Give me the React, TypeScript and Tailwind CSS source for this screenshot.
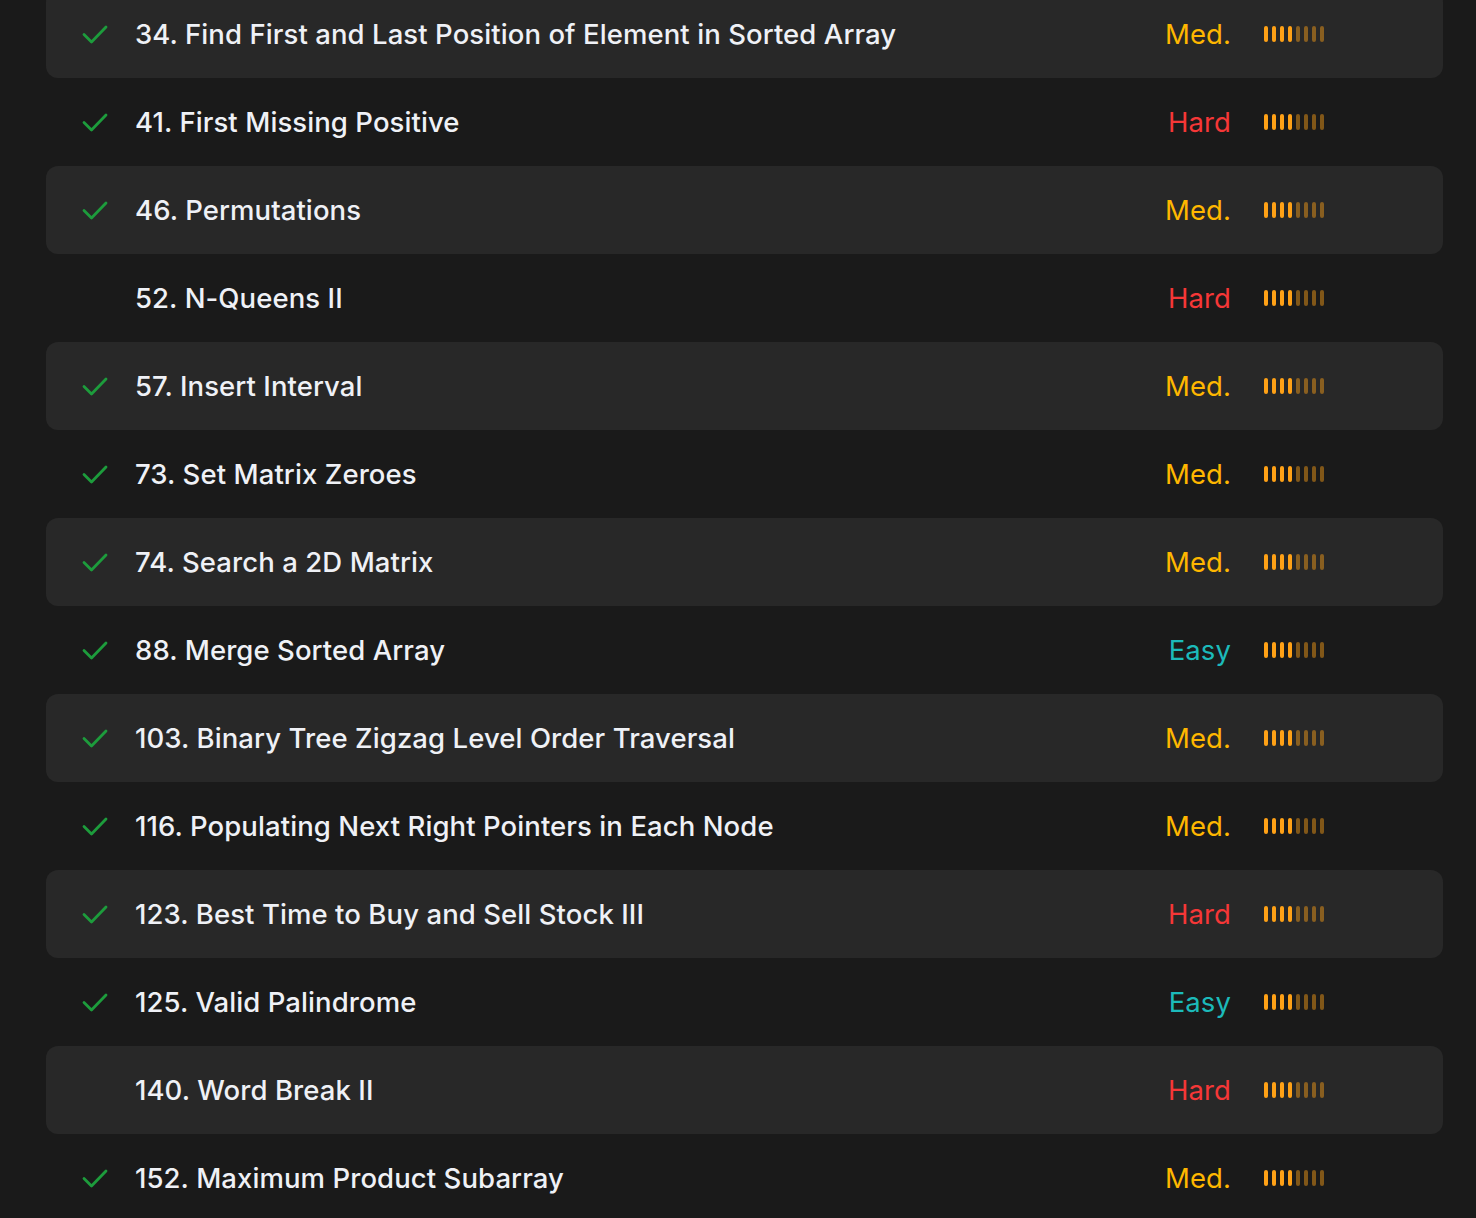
import React from 'react';

type Difficulty = 'Easy' | 'Med.' | 'Hard';

interface Problem {
  title: string;
  difficulty: Difficulty;
  solved: boolean;
}

const problems: Problem[] = [
  { title: '34. Find First and Last Position of Element in Sorted Array', difficulty: 'Med.', solved: true },
  { title: '41. First Missing Positive', difficulty: 'Hard', solved: true },
  { title: '46. Permutations', difficulty: 'Med.', solved: true },
  { title: '52. N-Queens II', difficulty: 'Hard', solved: false },
  { title: '57. Insert Interval', difficulty: 'Med.', solved: true },
  { title: '73. Set Matrix Zeroes', difficulty: 'Med.', solved: true },
  { title: '74. Search a 2D Matrix', difficulty: 'Med.', solved: true },
  { title: '88. Merge Sorted Array', difficulty: 'Easy', solved: true },
  { title: '103. Binary Tree Zigzag Level Order Traversal', difficulty: 'Med.', solved: true },
  { title: '116. Populating Next Right Pointers in Each Node', difficulty: 'Med.', solved: true },
  { title: '123. Best Time to Buy and Sell Stock III', difficulty: 'Hard', solved: true },
  { title: '125. Valid Palindrome', difficulty: 'Easy', solved: true },
  { title: '140. Word Break II', difficulty: 'Hard', solved: false },
  { title: '152. Maximum Product Subarray', difficulty: 'Med.', solved: true },
];

const difficultyColor: Record<Difficulty, string> = {
  Easy: 'text-[#1cbaba]',
  'Med.': 'text-[#ffb700]',
  Hard: 'text-[#f63737]',
};

const CheckIcon = () => (
  <svg width="26" height="20" viewBox="0 0 26 20" fill="none">
    <path
      d="M2 10.5l7.5 7.5L24 3"
      stroke="#1d9c3c"
      strokeWidth={2.8}
      strokeLinecap="round"
      strokeLinejoin="round"
    />
  </svg>
);

/** Frequency meter: 8 small pills, first 4 lit */
const FrequencyBars = ({ level = 4 }: { level?: number }) => (
  <div className="flex items-center gap-[4px]">
    {Array.from({ length: 8 }).map((_, i) => (
      <span
        key={i}
        className={`block h-[16px] w-[4px] rounded-full ${i < level ? 'bg-[#ffa116]' : 'bg-[#ffa116]/45'}`}
      />
    ))}
  </div>
);

export default function App() {
  return (
    <div
      className="min-h-[1218px] w-full overflow-hidden bg-[#1a1a1a] pl-[46px] pr-[33px]"
      style={{ fontFamily: 'Inter, "Noto Sans", sans-serif' }}
    >
      <div className="-mt-[10px] flex flex-col">
        {problems.map((p, i) => (
          <div
            key={p.title}
            className={`flex h-[88px] items-center rounded-[12px] pl-[36px] pr-[119px] ${i % 2 === 0 ? 'bg-[#282828]' : ''}`}
          >
            <div className="flex w-[53px] items-center">{p.solved && <CheckIcon />}</div>
            <div className="flex-1 truncate pt-[2px] text-[27.5px] font-medium tracking-[0.08px] text-[#eff1f6]">
              {p.title}
            </div>
            <div className={`pt-[2px] text-right text-[27.5px] tracking-[0.1px] ${difficultyColor[p.difficulty]}`}>
              {p.difficulty}
            </div>
            <div className="ml-[33px]">
              <FrequencyBars />
            </div>
          </div>
        ))}
      </div>
    </div>
  );
}
